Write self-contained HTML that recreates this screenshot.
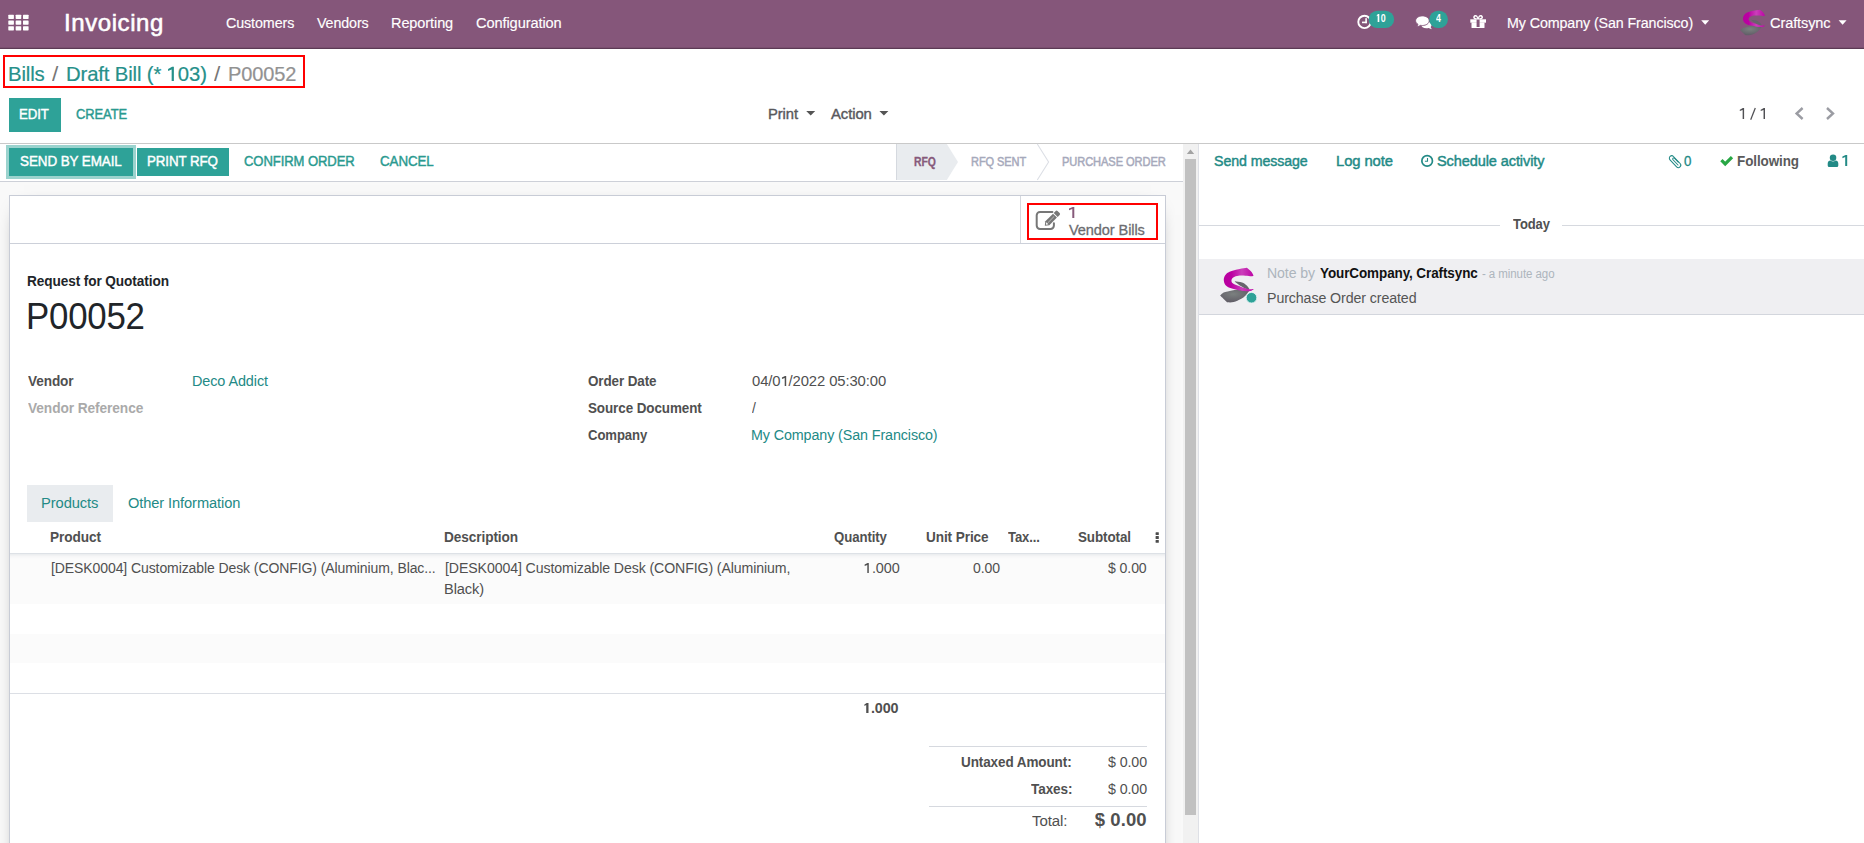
<!DOCTYPE html>
<html><head><meta charset="utf-8"><title>P00052 - Odoo</title>
<style>
html,body{margin:0;padding:0}
body{width:1864px;height:843px;overflow:hidden;position:relative;background:#fff;font-family:"Liberation Sans",sans-serif}
.a{position:absolute}
.t{position:absolute;white-space:nowrap;line-height:1;transform-origin:0 0;font-family:"Liberation Sans",sans-serif}
</style></head><body>
<!-- navbar -->
<div class="a" style="left:0;top:0;width:1864px;height:48px;background:#85567a;border-bottom:1px solid #5c3a55"></div>
<div class="a" style="left:0;top:47px;width:1864px;height:1px;background:#7a4f6f"></div>
<!-- control panel -->
<div class="a" style="left:0;top:143px;width:1864px;height:1px;background:#c9c9c9"></div>
<div class="a" style="left:3px;top:55px;width:298px;height:29px;border:2px solid #ff0000"></div>
<div class="a" style="left:9px;top:98px;width:52px;height:34px;background:#2ea298"></div>
<!-- status bar -->
<div class="a" style="left:0;top:181px;width:1183px;height:1px;background:#cdd0d8"></div>
<div class="a" style="left:9px;top:148px;width:124px;height:28px;background:#2ea298;box-shadow:0 0 0 3px rgba(46,162,152,.48)"></div>
<div class="a" style="left:137px;top:148px;width:92px;height:28px;background:#2ea298"></div>
<!-- form background + sheet -->
<div class="a" style="left:0;top:182px;width:1183px;height:661px;background:#f9f9f9"></div>
<div class="a" style="left:9px;top:195px;width:1155px;height:700px;background:#fff;border:1px solid #c8ccd6;box-shadow:0 5px 20px -15px #000"></div>
<div class="a" style="left:10px;top:243px;width:1155px;height:1px;background:#ccd0d9"></div>
<div class="a" style="left:1020px;top:196px;width:1px;height:47px;background:#d5d8de"></div>
<div class="a" style="left:1027px;top:203px;width:127px;height:33px;border:2px solid #ff0000"></div>
<!-- tabs -->
<div class="a" style="left:27px;top:485px;width:86px;height:37px;background:#e9ecef"></div>
<!-- table -->
<div class="a" style="left:10px;top:553px;width:1155px;height:51px;background:linear-gradient(#dde1e6 0,#dde1e6 1px,#eceef0 1.5px,#f6f6f7 3.5px,#fbfbfb 6px);box-sizing:border-box"></div>
<div class="a" style="left:10px;top:634px;width:1155px;height:29px;background:#fbfbfb"></div>
<div class="a" style="left:10px;top:693px;width:1155px;height:1px;background:#dcdfe5"></div>
<div class="a" style="left:929px;top:746px;width:218px;height:1px;background:#d6d9df"></div>
<div class="a" style="left:929px;top:806px;width:218px;height:1px;background:#d6d9df"></div>
<!-- scrollbar -->
<div class="a" style="left:1183px;top:144px;width:15px;height:699px;background:#f1f1f1;border-right:1px solid #dee0e6"></div>
<div class="a" style="left:1185px;top:159px;width:11px;height:656px;background:#c1c1c1"></div>
<!-- chatter -->
<div class="a" style="left:1199px;top:144px;width:665px;height:699px;background:#fff"></div>
<div class="a" style="left:1199px;top:225px;width:301px;height:1px;background:#d6d9df"></div>
<div class="a" style="left:1562px;top:225px;width:302px;height:1px;background:#d6d9df"></div>
<div class="a" style="left:1199px;top:259px;width:665px;height:55px;background:#efeff2;border-bottom:1px solid #d3d6dd"></div>
<svg class="a" style="left:0;top:0" width="1864" height="843" viewBox="0 0 1864 843">
<defs>
<linearGradient id="gm" x1="0" y1="0" x2="1" y2="0"><stop offset="0" stop-color="#b8009f"/><stop offset=".25" stop-color="#bb00a2"/><stop offset=".6" stop-color="#cb3fba"/><stop offset="1" stop-color="#bc04a4"/></linearGradient>
<radialGradient id="gg" cx=".45" cy=".35" r=".6"><stop offset="0" stop-color="#7b807f"/><stop offset="1" stop-color="#625f68"/></radialGradient>
</defs>
<!-- apps grid -->
<g fill="#fff">
<rect x="8.3" y="14.7" width="5.6" height="4.2" rx=".6"/><rect x="15.65" y="14.7" width="5.6" height="4.2" rx=".6"/><rect x="23" y="14.7" width="5.6" height="4.2" rx=".6"/>
<rect x="8.3" y="20.45" width="5.6" height="4.2" rx=".6"/><rect x="15.65" y="20.45" width="5.6" height="4.2" rx=".6"/><rect x="23" y="20.45" width="5.6" height="4.2" rx=".6"/>
<rect x="8.3" y="26.2" width="5.6" height="4.2" rx=".6"/><rect x="15.65" y="26.2" width="5.6" height="4.2" rx=".6"/><rect x="23" y="26.2" width="5.6" height="4.2" rx=".6"/>
</g>
<!-- navbar clock -->
<circle cx="1364.5" cy="21.9" r="6.2" fill="none" stroke="#fff" stroke-width="1.9"/>
<rect x="1365.3" y="18.2" width="1.6" height="5" fill="#fff"/><rect x="1362" y="21.6" width="4.9" height="1.6" fill="#fff"/>
<rect x="1368.7" y="10.8" width="25.4" height="17.2" rx="8.6" fill="#2ea298"/>
<!-- chat -->
<g fill="#fff">
<path d="M1431.8 29.2 L1428.6 27.9 Q1427.6 28.3 1426.4 28.3 C1423.2 28.3 1421.2 26.6 1421.2 24.8 C1421.2 22.9 1423.4 21.4 1426.4 21.4 C1429.4 21.4 1431.6 22.9 1431.6 24.8 Q1431.6 26 1430.6 26.9 Z"/>
<path d="M1422.4 15.9 C1418.6 15.9 1415.6 18 1415.6 20.7 C1415.6 22.2 1416.6 23.5 1418 24.4 Q1417.8 25.6 1416.6 26.8 Q1419.2 26.6 1420.6 25.3 Q1421.4 25.5 1422.4 25.5 C1426.2 25.5 1429.2 23.4 1429.2 20.7 C1429.2 18 1426.2 15.9 1422.4 15.9 Z" stroke="#85567a" stroke-width=".9"/>
</g>
<rect x="1429.3" y="10.8" width="18.6" height="17.2" rx="8.6" fill="#2ea298"/>
<!-- gift -->
<g fill="#fff">
<rect x="1470.3" y="19.3" width="15.7" height="3.4"/>
<rect x="1471.5" y="22.5" width="13" height="5.6" rx=".5"/>
<path d="M1478.1 19.6 C1476 19.6 1473.2 19.2 1473.2 17.2 C1473.2 15.6 1474.6 15 1475.6 15 C1477 15 1477.8 16.4 1478.1 17.6 C1478.4 16.4 1479.2 15 1480.6 15 C1481.6 15 1483 15.6 1483 17.2 C1483 19.2 1480.2 19.6 1478.1 19.6 Z M1475.7 16.4 C1475.1 16.4 1474.7 16.7 1474.7 17.2 C1474.7 18 1476 18.3 1477.2 18.4 C1477 17.4 1476.5 16.4 1475.7 16.4 Z M1480.5 16.4 C1479.7 16.4 1479.2 17.4 1479 18.4 C1480.2 18.3 1481.5 18 1481.5 17.2 C1481.5 16.7 1481.1 16.4 1480.5 16.4 Z" fill-rule="evenodd"/>
</g>
<rect x="1476.6" y="19.6" width="3" height="7.4" fill="#85567a"/>
<!-- navbar carets -->
<path d="M1701.2 20.3 h8 l-4 4.4 z M1838.6 20.3 h8 l-4 4.4 z" fill="#fff"/>
<!-- navbar avatar -->
<g transform="translate(1740.2 9.7) scale(.74) translate(-1220.1 -267.8)"><path d="M1234.90 281.34 C1236.08 281.54 1240.03 281.83 1242.01 282.53 C1243.99 283.22 1245.52 284.40 1246.75 285.49 C1247.99 286.58 1248.97 288.45 1249.42 289.05 C1248.78 289.00 1247.00 289.24 1245.57 288.75 C1244.13 288.26 1242.50 287.17 1240.82 286.08 C1239.14 285.00 1236.48 283.02 1235.49 282.23 C1234.50 281.44 1235.00 281.49 1234.90 281.34Z" fill="#66646b"/><path d="M1249.42 290.53 C1248.38 290.43 1245.32 290.08 1243.20 289.93 C1241.07 289.79 1239.24 289.39 1236.67 289.64 C1234.11 289.89 1229.96 290.92 1227.78 291.42 C1225.61 291.91 1224.92 291.91 1223.63 292.60 C1222.35 293.29 1220.67 295.07 1220.08 295.57 C1221.26 296.70 1226.00 301.25 1227.19 302.38 C1228.28 302.33 1231.44 302.63 1233.71 302.09 C1235.98 301.54 1238.85 300.21 1240.82 299.12 C1242.80 298.04 1244.13 297.00 1245.57 295.57 C1247.00 294.13 1248.78 291.37 1249.42 290.53Z" fill="url(#gg)"/><path d="M1253.57 275.53 C1253.12 274.82 1252.04 272.55 1250.90 271.26 C1249.76 269.98 1247.44 268.40 1246.75 267.82 C1245.57 268.00 1242.01 268.42 1239.64 268.89 C1237.27 269.37 1234.60 269.98 1232.53 270.67 C1230.45 271.36 1228.57 271.95 1227.19 273.04 C1225.81 274.13 1224.77 275.81 1224.23 277.19 C1223.68 278.57 1223.73 280.06 1223.93 281.34 C1224.13 282.62 1224.47 283.81 1225.41 284.90 C1226.35 285.98 1227.68 287.07 1229.56 287.86 C1231.44 288.65 1234.20 289.10 1236.67 289.64 C1239.14 290.18 1242.11 290.87 1244.38 291.12 C1246.65 291.37 1248.73 291.47 1250.31 291.12 C1251.89 290.77 1253.27 289.39 1253.86 289.05 C1252.98 289.05 1250.70 289.44 1248.53 289.05 C1246.36 288.65 1243.10 287.42 1240.82 286.67 C1238.55 285.93 1236.38 285.29 1234.90 284.60 C1233.41 283.91 1232.48 283.36 1231.93 282.53 C1231.39 281.69 1231.34 280.45 1231.64 279.56 C1231.93 278.67 1232.57 277.83 1233.71 277.19 C1234.85 276.55 1236.48 275.96 1238.45 275.71 C1240.43 275.46 1243.39 275.61 1245.57 275.71 C1247.74 275.81 1250.16 276.33 1251.49 276.30 C1252.83 276.27 1253.22 275.66 1253.57 275.53Z" fill="url(#gm)"/></g>
<!-- control panel carets -->
<path d="M806.2 111 h9 l-4.5 4.6 z M879.4 111 h9 l-4.5 4.6 z" fill="#555"/>
<!-- pager chevrons -->
<path d="M1802.6 108 L1796.6 113.5 L1802.6 119" fill="none" stroke="#9b9ca3" stroke-width="2.4"/>
<path d="M1827 108 L1833 113.5 L1827 119" fill="none" stroke="#9b9ca3" stroke-width="2.4"/>
<!-- statusbar arrows -->
<path d="M896 144 H946.8 L958 162 L946.8 180 H896 Z" fill="#e9ecef"/>
<rect x="896" y="144" width="1" height="36" fill="#d5d9df"/>
<path d="M1037.3 144 L1048.6 162 L1037.3 180" fill="none" stroke="#dcdfe5" stroke-width="1.1"/>
<!-- stat button icon -->
<path d="M1052.4 211.9 H1040 a3.3 3.3 0 0 0 -3.3 3.3 V225.6 a3.3 3.3 0 0 0 3.3 3.3 H1050.6 a3.3 3.3 0 0 0 3.3 -3.3 V223.2" fill="none" stroke="#777" stroke-width="2" stroke-linecap="round"/>
<g transform="translate(1044.8 225.8) rotate(-45)" fill="#777">
<path d="M0 0 L3.6 -2.8 H14.4 V2.8 H3.6 Z"/>
<path d="M15.4 -2.8 H18.2 a1.3 1.3 0 0 1 1.3 1.3 V1.5 a1.3 1.3 0 0 1 -1.3 1.3 H15.4 Z"/>
<path d="M1.6 0 L3.6 -1.5 V1.5 Z" fill="#fff"/>
<rect x="4.4" y="-.35" width="8.6" height=".7" fill="#bbb"/>
</g>
<!-- table kebab -->
<g fill="#4c4c4c"><rect x="1155.6" y="532.3" width="3.2" height="2.8" rx=".5"/><rect x="1155.6" y="536.1" width="3.2" height="2.8" rx=".5"/><rect x="1155.6" y="539.9" width="3.2" height="2.8" rx=".5"/></g>
<!-- scrollbar arrow -->
<path d="M1186.8 154 L1190.5 149.6 L1194.2 154 Z" fill="#a3a3a3"/>
<!-- digit ones -->
<path d="M1744.1 108.1 V118.9 H1742.65 V110.05 L1739.80 111.10 V109.65 L1742.87 108.1 Z M1765 108.1 V118.9 H1763.55 V110.05 L1760.70 111.10 V109.65 L1763.77 108.1 Z" fill="#505054"/>
<path d="M1750.7 119.8 L1755.3 108.1" stroke="#505054" stroke-width="1.25" fill="none"/>
<path d="M1074.3 207 V218 H1072.30 V209.10 L1069.00 210.30 V208.60 L1072.70 207 Z" fill="#875a7b"/>
<path d="M1847.2 155 V166 H1845.20 V157.10 L1842.40 158.30 V156.60 L1845.60 155 Z" fill="#238a86"/>
<!-- chatter icons -->
<circle cx="1427.15" cy="160.9" r="5.3" fill="none" stroke="#238a86" stroke-width="1.7"/>
<path d="M1427.5 158 V161.3 H1424.9" fill="none" stroke="#238a86" stroke-width="1.1"/>
<!-- paperclip -->
<g fill="none" stroke="#238a86" stroke-width="1.05" stroke-linecap="round" transform="translate(.5 .8)"><path d="M1673.0 155.7 L1679.6 162.7 A2.4 2.4 0 0 1 1676.1 166 L1669.5 159 A2.4 2.4 0 0 1 1673.0 155.7 Z"/><path d="M1677.5 164.2 L1672.3 158.7 A1.1 1.1 0 0 1 1673.9 157.3 L1677.8 161.4"/></g>
<!-- check -->
<path d="M1721.4 160.2 L1725.2 164 L1732 157.2" fill="none" stroke="#28a745" stroke-width="3.2"/>
<!-- user -->
<g fill="#238a86"><circle cx="1833.05" cy="157.8" r="3.25"/><path d="M1827.7 165.4 V163.6 C1827.7 161.6 1829 160.7 1830.4 160.6 Q1833.05 162.6 1835.7 160.6 C1837.1 160.7 1838.3 161.6 1838.3 163.6 V165.4 A1.5 1.5 0 0 1 1836.8 166.9 H1829.2 A1.5 1.5 0 0 1 1827.7 165.4 Z"/></g>
<!-- message avatar -->
<g><path d="M1234.90 281.34 C1236.08 281.54 1240.03 281.83 1242.01 282.53 C1243.99 283.22 1245.52 284.40 1246.75 285.49 C1247.99 286.58 1248.97 288.45 1249.42 289.05 C1248.78 289.00 1247.00 289.24 1245.57 288.75 C1244.13 288.26 1242.50 287.17 1240.82 286.08 C1239.14 285.00 1236.48 283.02 1235.49 282.23 C1234.50 281.44 1235.00 281.49 1234.90 281.34Z" fill="#66646b"/><path d="M1249.42 290.53 C1248.38 290.43 1245.32 290.08 1243.20 289.93 C1241.07 289.79 1239.24 289.39 1236.67 289.64 C1234.11 289.89 1229.96 290.92 1227.78 291.42 C1225.61 291.91 1224.92 291.91 1223.63 292.60 C1222.35 293.29 1220.67 295.07 1220.08 295.57 C1221.26 296.70 1226.00 301.25 1227.19 302.38 C1228.28 302.33 1231.44 302.63 1233.71 302.09 C1235.98 301.54 1238.85 300.21 1240.82 299.12 C1242.80 298.04 1244.13 297.00 1245.57 295.57 C1247.00 294.13 1248.78 291.37 1249.42 290.53Z" fill="url(#gg)"/><path d="M1253.57 275.53 C1253.12 274.82 1252.04 272.55 1250.90 271.26 C1249.76 269.98 1247.44 268.40 1246.75 267.82 C1245.57 268.00 1242.01 268.42 1239.64 268.89 C1237.27 269.37 1234.60 269.98 1232.53 270.67 C1230.45 271.36 1228.57 271.95 1227.19 273.04 C1225.81 274.13 1224.77 275.81 1224.23 277.19 C1223.68 278.57 1223.73 280.06 1223.93 281.34 C1224.13 282.62 1224.47 283.81 1225.41 284.90 C1226.35 285.98 1227.68 287.07 1229.56 287.86 C1231.44 288.65 1234.20 289.10 1236.67 289.64 C1239.14 290.18 1242.11 290.87 1244.38 291.12 C1246.65 291.37 1248.73 291.47 1250.31 291.12 C1251.89 290.77 1253.27 289.39 1253.86 289.05 C1252.98 289.05 1250.70 289.44 1248.53 289.05 C1246.36 288.65 1243.10 287.42 1240.82 286.67 C1238.55 285.93 1236.38 285.29 1234.90 284.60 C1233.41 283.91 1232.48 283.36 1231.93 282.53 C1231.39 281.69 1231.34 280.45 1231.64 279.56 C1231.93 278.67 1232.57 277.83 1233.71 277.19 C1234.85 276.55 1236.48 275.96 1238.45 275.71 C1240.43 275.46 1243.39 275.61 1245.57 275.71 C1247.74 275.81 1250.16 276.33 1251.49 276.30 C1252.83 276.27 1253.22 275.66 1253.57 275.53Z" fill="url(#gm)"/></g>
<circle cx="1251.5" cy="297.7" r="5.3" fill="#2ea298" stroke="#e4f4f6" stroke-width=".8"/>
<path d="M1379.31 14.00 V22 H1377.66 V15.52 L1376.78 16.40 V15.24 L1377.99 14.00 Z" fill="#ffffff"/>
<path d="M173.88 66.70 V81 H171.66 V69.42 L168.07 70.99 V68.92 L172.10 66.70 Z" fill="#26908a"/>
<path d="M786.20 376.00 V386 H784.71 V377.90 L781.96 379.00 V377.55 L785.01 376.00 Z" fill="#505050"/>
<path d="M868.79 563.00 V573 H867.30 V564.90 L864.66 566.00 V564.55 L867.60 563.00 Z" fill="#505050"/>
<path d="M868.50 703.00 V713 H866.22 V704.90 L864.40 706.00 V704.55 L866.68 703.00 Z" fill="#505050"/>
</svg>

<span class="t" style="left:64.00px;top:11px;font-size:24px;color:#ffffff;letter-spacing:0.578px;-webkit-text-stroke:0.55px #ffffff;">Invoicing</span>
<span class="t" style="left:225.70px;top:15px;font-size:15.2px;color:#ffffff;letter-spacing:-0.103px;transform:scaleX(0.9410);-webkit-text-stroke:0.15px #ffffff;">Customers</span>
<span class="t" style="left:317.30px;top:15px;font-size:15.2px;color:#ffffff;letter-spacing:-0.103px;transform:scaleX(0.9384);-webkit-text-stroke:0.15px #ffffff;">Vendors</span>
<span class="t" style="left:391.44px;top:15px;font-size:15.2px;color:#ffffff;letter-spacing:-0.103px;transform:scaleX(0.9562);-webkit-text-stroke:0.15px #ffffff;">Reporting</span>
<span class="t" style="left:475.80px;top:15px;font-size:15.2px;color:#ffffff;letter-spacing:-0.103px;transform:scaleX(0.9621);-webkit-text-stroke:0.15px #ffffff;">Configuration</span>
<span class="t" style="left:1506.86px;top:15px;font-size:15.2px;color:#ffffff;letter-spacing:-0.103px;transform:scaleX(0.9389);-webkit-text-stroke:0.15px #ffffff;">My Company (San Francisco)</span>
<span class="t" style="left:1770.40px;top:15px;font-size:15.2px;color:#ffffff;letter-spacing:-0.103px;transform:scaleX(0.9573);-webkit-text-stroke:0.15px #ffffff;">Craftsync</span>
<span class="t" style="left:1376.10px;top:13px;font-size:11px;color:#ffffff;font-weight:700;letter-spacing:-0.074px;transform:scaleX(0.8054);">&#8199;0</span>
<span class="t" style="left:1435.70px;top:13px;font-size:11px;color:#ffffff;font-weight:700;transform:scaleX(0.8000);">4</span>
<span class="t" style="left:7.71px;top:64px;font-size:20.6px;color:#26908a;letter-spacing:-0.139px;transform:scaleX(0.9887);-webkit-text-stroke:0.2px #26908a;">Bills</span>
<span class="t" style="left:52.40px;top:64px;font-size:20.6px;color:#777;transform:scaleX(1.1000);">/</span>
<span class="t" style="left:65.81px;top:64px;font-size:20.6px;color:#26908a;letter-spacing:-0.139px;transform:scaleX(0.9857);-webkit-text-stroke:0.2px #26908a;">Draft Bill (* &#8199;03)</span>
<span class="t" style="left:214.30px;top:64px;font-size:20.6px;color:#777;transform:scaleX(1.1000);">/</span>
<span class="t" style="left:227.63px;top:64px;font-size:20.6px;color:#929292;letter-spacing:-0.139px;transform:scaleX(0.9716);-webkit-text-stroke:0.2px #929292;">P00052</span>
<span class="t" style="left:19.31px;top:107px;font-size:14.9px;color:#ffffff;letter-spacing:-0.101px;transform:scaleX(0.8887);-webkit-text-stroke:0.45px #ffffff;">EDIT</span>
<span class="t" style="left:76.40px;top:107px;font-size:14.9px;color:#2a9a90;letter-spacing:-0.101px;transform:scaleX(0.8699);-webkit-text-stroke:0.45px #2a9a90;">CREATE</span>
<span class="t" style="left:768.13px;top:106px;font-size:15.2px;color:#58585c;letter-spacing:-0.103px;transform:scaleX(0.9739);-webkit-text-stroke:0.4px #58585c;">Print</span>
<span class="t" style="left:831.10px;top:106px;font-size:15.2px;color:#58585c;letter-spacing:-0.103px;transform:scaleX(0.9794);-webkit-text-stroke:0.4px #58585c;">Action</span>
<span class="t" style="left:19.80px;top:154px;font-size:14.9px;color:#ffffff;letter-spacing:-0.101px;transform:scaleX(0.9032);-webkit-text-stroke:0.45px #ffffff;">SEND BY EMAIL</span>
<span class="t" style="left:147.20px;top:154px;font-size:14.9px;color:#ffffff;letter-spacing:-0.101px;transform:scaleX(0.8966);-webkit-text-stroke:0.45px #ffffff;">PRINT RFQ</span>
<span class="t" style="left:243.60px;top:154px;font-size:14.9px;color:#2a9a90;letter-spacing:-0.101px;transform:scaleX(0.8780);-webkit-text-stroke:0.45px #2a9a90;">CONFIRM ORDER</span>
<span class="t" style="left:380.40px;top:154px;font-size:14.9px;color:#2a9a90;letter-spacing:-0.101px;transform:scaleX(0.8973);-webkit-text-stroke:0.45px #2a9a90;">CANCEL</span>
<span class="t" style="left:914.00px;top:156px;font-size:12.5px;color:#875A7B;font-weight:700;letter-spacing:-0.084px;transform:scaleX(0.8342);-webkit-text-stroke:0.3px #875A7B;">RFQ</span>
<span class="t" style="left:971.32px;top:156px;font-size:12.5px;color:#a6a9bb;letter-spacing:-0.084px;transform:scaleX(0.8811);-webkit-text-stroke:0.5px #a6a9bb;">RFQ SENT</span>
<span class="t" style="left:1061.61px;top:156px;font-size:12.5px;color:#a6a9bb;letter-spacing:-0.084px;transform:scaleX(0.8866);-webkit-text-stroke:0.5px #a6a9bb;">PURCHASE ORDER</span>
<span class="t" style="left:1068.60px;top:222px;font-size:15.2px;color:#6c6c70;letter-spacing:-0.103px;transform:scaleX(0.9600);-webkit-text-stroke:0.3px #6c6c70;">Vendor Bills</span>
<span class="t" style="left:26.60px;top:273px;font-size:15.2px;color:#212529;font-weight:700;letter-spacing:-0.103px;transform:scaleX(0.8970);">Request for Quotation</span>
<span class="t" style="left:26.26px;top:299px;font-size:36px;color:#212529;letter-spacing:-0.243px;transform:scaleX(0.9676);">P00052</span>
<span class="t" style="left:27.50px;top:373px;font-size:15.2px;color:#505050;font-weight:700;letter-spacing:-0.103px;transform:scaleX(0.8951);">Vendor</span>
<span class="t" style="left:191.75px;top:373px;font-size:15.2px;color:#238a86;letter-spacing:-0.103px;transform:scaleX(0.9499);">Deco Addict</span>
<span class="t" style="left:27.50px;top:400px;font-size:15.2px;color:#aaaaaa;font-weight:700;letter-spacing:-0.103px;transform:scaleX(0.9036);">Vendor Reference</span>
<span class="t" style="left:587.60px;top:373px;font-size:15.2px;color:#505050;font-weight:700;letter-spacing:-0.103px;transform:scaleX(0.8843);">Order Date</span>
<span class="t" style="left:752.40px;top:373px;font-size:15.2px;color:#505050;letter-spacing:-0.103px;transform:scaleX(0.9755);">04/0&#8199;/2022 05:30:00</span>
<span class="t" style="left:587.60px;top:400px;font-size:15.2px;color:#505050;font-weight:700;letter-spacing:-0.103px;transform:scaleX(0.8851);">Source Document</span>
<span class="t" style="left:752.40px;top:400px;font-size:15.2px;color:#505050;transform:scaleX(0.9200);">/</span>
<span class="t" style="left:587.60px;top:427px;font-size:15.2px;color:#505050;font-weight:700;letter-spacing:-0.103px;transform:scaleX(0.8635);">Company</span>
<span class="t" style="left:751.46px;top:427px;font-size:15.2px;color:#238a86;letter-spacing:-0.103px;transform:scaleX(0.9410);">My Company (San Francisco)</span>
<span class="t" style="left:40.93px;top:495px;font-size:15.2px;color:#238a86;letter-spacing:-0.103px;transform:scaleX(0.9706);">Products</span>
<span class="t" style="left:128.10px;top:495px;font-size:15.2px;color:#238a86;letter-spacing:-0.103px;transform:scaleX(0.9639);">Other Information</span>
<span class="t" style="left:49.50px;top:529px;font-size:15.2px;color:#505050;font-weight:700;letter-spacing:-0.103px;transform:scaleX(0.8976);">Product</span>
<span class="t" style="left:444.10px;top:529px;font-size:15.2px;color:#505050;font-weight:700;letter-spacing:-0.103px;transform:scaleX(0.8986);">Description</span>
<span class="t" style="left:833.60px;top:529px;font-size:15.2px;color:#505050;font-weight:700;letter-spacing:-0.103px;transform:scaleX(0.8693);">Quantity</span>
<span class="t" style="left:926.10px;top:529px;font-size:15.2px;color:#505050;font-weight:700;letter-spacing:-0.103px;transform:scaleX(0.8947);">Unit Price</span>
<span class="t" style="left:1008.40px;top:529px;font-size:15.2px;color:#505050;font-weight:700;letter-spacing:-0.103px;transform:scaleX(0.8602);">Tax...</span>
<span class="t" style="left:1078.30px;top:529px;font-size:15.2px;color:#505050;font-weight:700;letter-spacing:-0.103px;transform:scaleX(0.8846);">Subtotal</span>
<span class="t" style="left:50.58px;top:560px;font-size:15.2px;color:#505050;letter-spacing:-0.103px;transform:scaleX(0.9225);">[DESK0004] Customizable Desk (CONFIG) (Aluminium, Blac...</span>
<span class="t" style="left:445.07px;top:560px;font-size:15.2px;color:#505050;letter-spacing:-0.103px;transform:scaleX(0.9299);">[DESK0004] Customizable Desk (CONFIG) (Aluminium,</span>
<span class="t" style="left:444.04px;top:581px;font-size:15.2px;color:#505050;letter-spacing:-0.103px;transform:scaleX(0.9625);">Black)</span>
<span class="t" style="left:863.55px;top:560px;font-size:15.2px;color:#505050;letter-spacing:-0.103px;transform:scaleX(0.9516);">&#8199;.000</span>
<span class="t" style="left:972.80px;top:560px;font-size:15.2px;color:#505050;letter-spacing:-0.103px;transform:scaleX(0.9235);">0.00</span>
<span class="t" style="left:1108.20px;top:560px;font-size:15.2px;color:#505050;letter-spacing:-0.103px;transform:scaleX(0.9281);">$ 0.00</span>
<span class="t" style="left:863.30px;top:700px;font-size:15.2px;color:#505050;font-weight:700;letter-spacing:-0.103px;transform:scaleX(0.9449);">&#8199;.000</span>
<span class="t" style="left:961.40px;top:754px;font-size:15.2px;color:#505050;font-weight:700;letter-spacing:-0.103px;transform:scaleX(0.8883);">Untaxed Amount:</span>
<span class="t" style="left:1107.80px;top:754px;font-size:15.2px;color:#505050;letter-spacing:-0.103px;transform:scaleX(0.9378);">$ 0.00</span>
<span class="t" style="left:1031.00px;top:781px;font-size:15.2px;color:#505050;font-weight:700;letter-spacing:-0.103px;transform:scaleX(0.8938);">Taxes:</span>
<span class="t" style="left:1107.80px;top:781px;font-size:15.2px;color:#505050;letter-spacing:-0.103px;transform:scaleX(0.9378);">$ 0.00</span>
<span class="t" style="left:1031.90px;top:813px;font-size:15.2px;color:#505050;letter-spacing:-0.103px;transform:scaleX(0.9923);">Total:</span>
<span class="t" style="left:1094.80px;top:811px;font-size:18.5px;color:#505050;font-weight:700;letter-spacing:0.071px;">$ 0.00</span>
<span class="t" style="left:1213.90px;top:153px;font-size:15.2px;color:#238a86;letter-spacing:-0.103px;transform:scaleX(0.9355);-webkit-text-stroke:0.45px #238a86;">Send message</span>
<span class="t" style="left:1335.73px;top:153px;font-size:15.2px;color:#238a86;letter-spacing:-0.103px;transform:scaleX(0.9745);-webkit-text-stroke:0.45px #238a86;">Log note</span>
<span class="t" style="left:1437.20px;top:153px;font-size:15.2px;color:#238a86;letter-spacing:-0.103px;transform:scaleX(0.9572);-webkit-text-stroke:0.45px #238a86;">Schedule activity</span>
<span class="t" style="left:1684.10px;top:153px;font-size:15.2px;color:#238a86;transform:scaleX(0.8750);-webkit-text-stroke:0.3px #238a86;">0</span>
<span class="t" style="left:1736.91px;top:153px;font-size:15.2px;color:#5a5a5a;font-weight:700;letter-spacing:-0.103px;transform:scaleX(0.8857);">Following</span>
<span class="t" style="left:1513.20px;top:216px;font-size:15.2px;color:#505050;font-weight:700;letter-spacing:-0.103px;transform:scaleX(0.8551);">Today</span>
<span class="t" style="left:1267.37px;top:265px;font-size:15.2px;color:#adb5bd;letter-spacing:-0.103px;transform:scaleX(0.9290);">Note by</span>
<span class="t" style="left:1320.30px;top:265px;font-size:15.2px;color:#111111;font-weight:700;letter-spacing:-0.103px;transform:scaleX(0.8871);">YourCompany, Craftsync</span>
<span class="t" style="left:1482.40px;top:268px;font-size:12.3px;color:#adb5bd;letter-spacing:-0.083px;transform:scaleX(0.9358);">- a minute ago</span>
<span class="t" style="left:1267.36px;top:290px;font-size:15.2px;color:#555555;letter-spacing:-0.103px;transform:scaleX(0.9352);">Purchase Order created</span>
</body></html>
